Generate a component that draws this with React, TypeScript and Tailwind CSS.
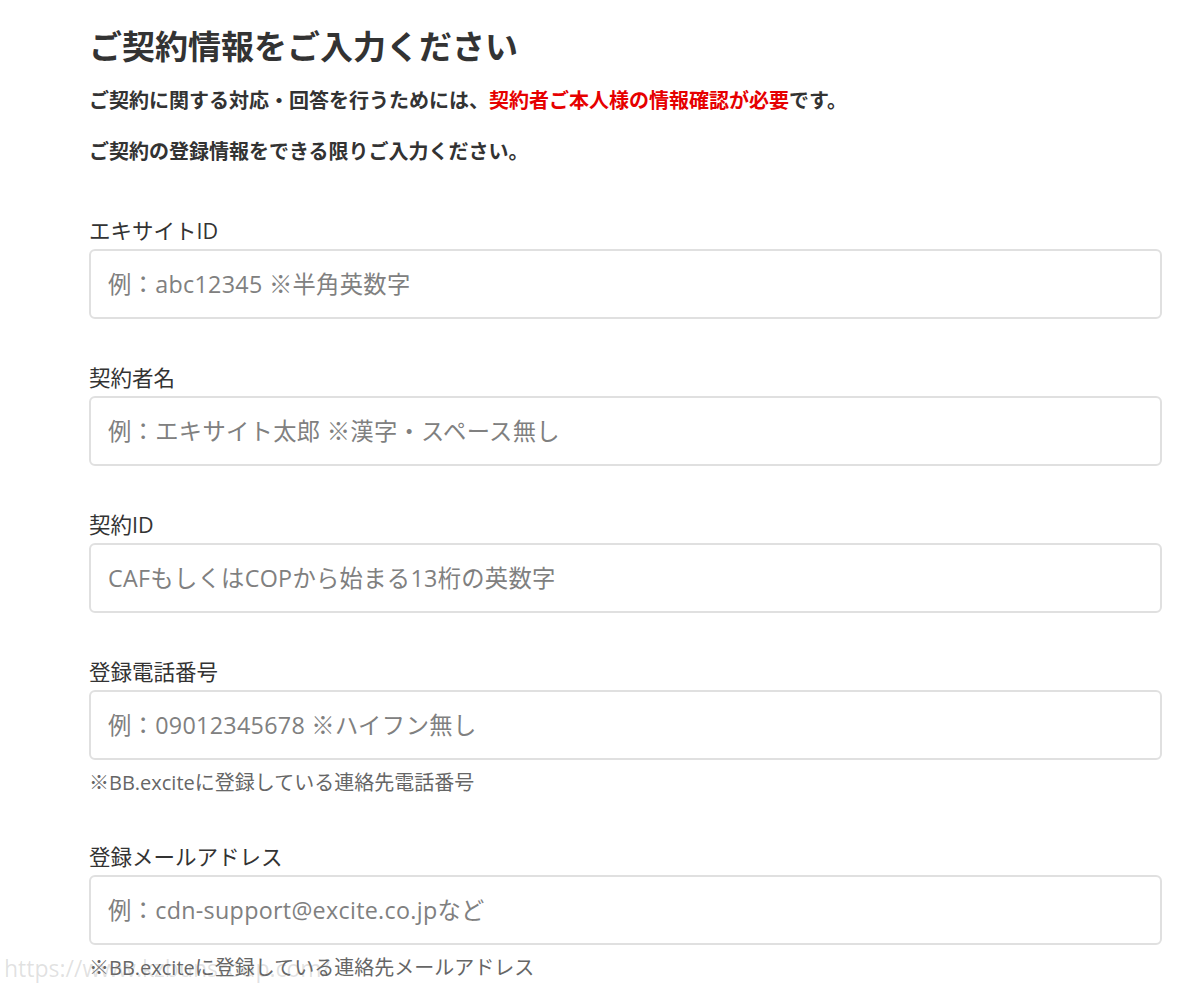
import React from "react";

const font = { fontFamily: '"Open Sans", "Noto Sans CJK JP", sans-serif' };

function Field({ label, placeholder, note }: { label: string; placeholder: string; note?: string }) {
  return (
    <div className="flex flex-col">
      <label className="text-[21.5px] leading-[28px] text-[#333] mb-[4px]">{label}</label>
      <input
        type="text"
        placeholder={placeholder}
        className="h-[70px] w-full rounded-[6px] border-2 border-[#e0e0e0] bg-white px-[17px] text-[23.3px] tracking-[0.3px] text-[#333] placeholder:text-[#808080] outline-none"
        style={font}
      />
      {note && <p className="mt-[8px] text-[20px] leading-[30px] text-[#666]">{note}</p>}
    </div>
  );
}

export default function App() {
  return (
    <div className="relative min-h-[985px] w-full overflow-hidden bg-white" style={font}>
      <div className="ml-[89px] mr-[38px] pt-[24px] flex flex-col">
        <h1 className="text-[33px] leading-[46px] font-bold text-[#333]">ご契約情報をご入力ください</h1>
        <p className="mt-[16px] text-[20px] leading-[30px] font-bold text-[#333]">
          ご契約に関する対応・回答を行うためには、<span className="text-[#e60000]">契約者ご本人様の情報確認が必要</span>です。
        </p>
        <p className="mt-[21px] text-[20px] leading-[30px] font-bold text-[#333]">ご契約の登録情報をできる限りご入力ください。</p>
        <div className="mt-[50px] flex flex-col gap-[45px]">
          <Field label="エキサイトID" placeholder="例：abc12345 ※半角英数字" />
          <Field label="契約者名" placeholder="例：エキサイト太郎 ※漢字・スペース無し" />
          <Field label="契約ID" placeholder="CAFもしくはCOPから始まる13桁の英数字" />
          <Field label="登録電話番号" placeholder="例：09012345678 ※ハイフン無し" note="※BB.exciteに登録している連絡先電話番号" />
          <Field label="登録メールアドレス" placeholder="例：cdn-support@excite.co.jpなど" note="※BB.exciteに登録している連絡先メールアドレス" />
        </div>
      </div>
      <div className="pointer-events-none absolute left-[4px] top-[953px] text-[23px] leading-[30px] text-[rgba(120,120,120,0.22)]">
        https://www.kzbunsroup.com/
      </div>
    </div>
  );
}
